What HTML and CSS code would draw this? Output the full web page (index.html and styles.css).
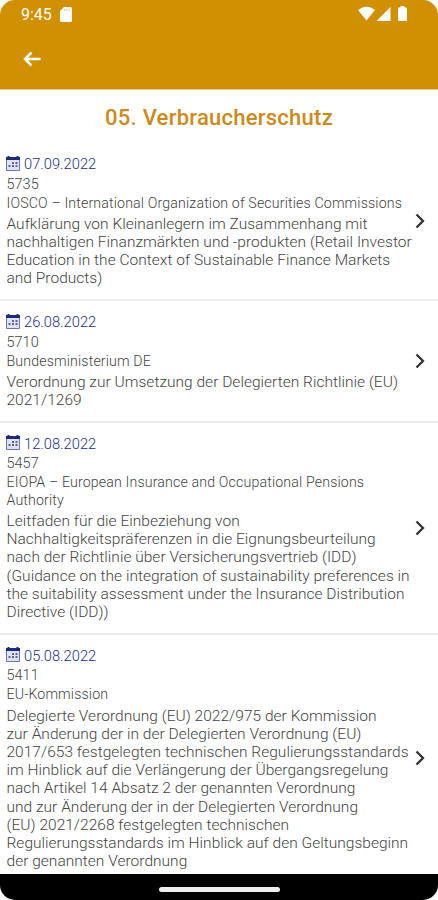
FILE: index.html
```
<!DOCTYPE html>
<html lang="de">
<head>
  <meta charset="UTF-8">
  <meta name="viewport" content="width=device-width, initial-scale=1.0">
  <link rel="stylesheet" href="styles.css">
  <title>05. Verbraucherschutz</title>
</head>
<body>

<svg class="sprite" aria-hidden="true">
  <symbol id="calendar" viewBox="0 0 14 15">
    <path d="M0 1h1.500V0h2v1h7V0h2v1H14v3H0z" fill="#1c2a7c"/>
    <path d="M.5 4v10.500h13V4" fill="#dfe3f1" stroke="#6d76aa"/>
    <path d="M6 6h2v2H6zM9.500 6h2v2h-2zM2.500 9h2v2h-2zM6 9h2v2H6zM9.500 9h2v2h-2z" fill="#5d679f"/>
  </symbol>
  <symbol id="chevron" viewBox="0 0 10 16">
    <path d="M1.500 1.500L8 8l-6.500 6.500" fill="none" stroke="#333" stroke-width="2.300"/>
  </symbol>
</svg>

<div class="phone">
  <header>
    <div class="status">
      <span class="time">9:45</span>
      <svg class="sd" viewBox="0 0 12 15"><path d="M4 0h6.500Q12 0 12 1.500v12q0 1.500-1.500 1.500h-9Q0 15 0 13.500V4z" fill="#fff"/><path d="M4.500 2v2M6.700 2v2M9 2v2" stroke="#e3bd68" stroke-width=".8"/></svg>
      <svg class="signals" viewBox="0 0 50 16">
        <path d="M0 4Q8.500-2.500 17 4L8.500 14.500z" fill="#fff"/>
        <path d="M18.500 15L32.500 1v14z" fill="#fff"/>
        <path d="M42.500 0h4v1.500H48q1 0 1 1V14q0 1-1 1h-7q-1 0-1-1V2.500q0-1 1-1h1.500z" fill="#fff"/>
      </svg>
    </div>
    <svg class="back" viewBox="0 0 18 16"><path d="M8.500 1.500L2 8l6.500 6.500M2 8h15.500" fill="none" stroke="#fff" stroke-width="2.500"/></svg>
  </header>

  <main>
    <h1>05. Verbraucherschutz</h1>

    <article>
      <div class="text">
        <div class="date"><svg><use href="#calendar"/></svg><span>07.09.2022</span></div>
        <div class="number">5735</div>
        <div class="org">IOSCO – International Organization of Securities Commissions</div>
        <div class="title">Aufklärung von Kleinanlegern im Zusammenhang mit<br>nachhaltigen Finanzmärkten und -produkten (Retail Investor<br>Education in the Context of Sustainable Finance Markets<br>and Products)</div>
      </div>
      <svg class="chevron"><use href="#chevron"/></svg>
    </article>

    <article>
      <div class="text">
        <div class="date"><svg><use href="#calendar"/></svg><span>26.08.2022</span></div>
        <div class="number">5710</div>
        <div class="org">Bundesministerium DE</div>
        <div class="title">Verordnung zur Umsetzung der Delegierten Richtlinie (EU)<br>2021/1269</div>
      </div>
      <svg class="chevron"><use href="#chevron"/></svg>
    </article>

    <article>
      <div class="text">
        <div class="date"><svg><use href="#calendar"/></svg><span>12.08.2022</span></div>
        <div class="number">5457</div>
        <div class="org">EIOPA – European Insurance and Occupational Pensions<br>Authority</div>
        <div class="title">Leitfaden für die Einbeziehung von<br>Nachhaltigkeitspräferenzen in die Eignungsbeurteilung<br>nach der Richtlinie über Versicherungsvertrieb (IDD)<br>(Guidance on the integration of sustainability preferences in<br>the suitability assessment under the Insurance Distribution<br>Directive (IDD))</div>
      </div>
      <svg class="chevron"><use href="#chevron"/></svg>
    </article>

    <article>
      <div class="text">
        <div class="date"><svg><use href="#calendar"/></svg><span>05.08.2022</span></div>
        <div class="number">5411</div>
        <div class="org">EU-Kommission</div>
        <div class="title">Delegierte Verordnung (EU) 2022/975 der Kommission<br>zur Änderung der in der Delegierten Verordnung (EU)<br>2017/653 festgelegten technischen Regulierungsstandards<br>im Hinblick auf die Verlängerung der Übergangsregelung<br>nach Artikel 14 Absatz 2 der genannten Verordnung<br>und zur Änderung der in der Delegierten Verordnung<br>(EU) 2021/2268 festgelegten technischen<br>Regulierungsstandards im Hinblick auf den Geltungsbeginn<br>der genannten Verordnung</div>
      </div>
      <svg class="chevron"><use href="#chevron"/></svg>
    </article>
  </main>

  <footer><div class="home"></div></footer>
</div>

</body>
</html>
```
FILE: styles.css
```
body {
  margin: 0;
  background-color: #fff;
  font-family: Roboto, sans-serif;
}

.sprite {
  display: none;
}

.phone {
  display: flex;
  flex-direction: column;
  height: 900px;
  width: 438px;
  border-radius: 15px;
  overflow: hidden;
}

header {
  box-sizing: border-box;
  flex: none;
  height: 90px;
  background-color: #d09000;
  border-bottom: 1px solid #e3c59c;
}

.status {
  display: flex;
  align-items: center;
  height: 28px;
  padding: 0 30px 0 21px;
}

.time {
  color: #fff;
  font-size: 16px;
  line-height: 29px;
}

.sd {
  width: 12px;
  height: 15px;
  margin-left: 8px;
}

.signals {
  width: 50px;
  height: 16px;
  margin-left: auto;
}

.back {
  display: block;
  width: 18px;
  height: 16px;
  margin: 23px 0 0 23px;
}

main {
  flex: 1;
  min-height: 0;
  overflow: hidden;
}

h1 {
  margin: 0;
  height: 53px;
  line-height: 55px;
  font-size: 22px;
  font-weight: 500;
  letter-spacing: 0.25px;
  text-align: center;
  color: #cd8a17;
}

article {
  display: flex;
  align-items: center;
  justify-content: space-between;
  padding: 11px 13px 11.5px 6.5px;
  border-bottom: 2px solid #ececec;
  color: #444;
  font-weight: 300;
  white-space: nowrap;
}

.text {
  width: 400px;
}

.date {
  display: flex;
  align-items: center;
  height: 20px;
  gap: 4px;
  font-size: 14.7px;
  color: #26307f;
}

.date svg {
  width: 14px;
  height: 15px;
  margin: -2px 0 0 -0.5px;
}

.number {
  margin-top: 0.5px;
  font-size: 14.5px;
  line-height: 19.5px;
}

.org {
  margin-top: 0.7px;
  font-size: 14.2px;
  letter-spacing: 0.14px;
  line-height: 17.5px;
}

.title {
  margin-top: 2.6px;
  font-size: 15.5px;
  letter-spacing: 0.02px;
  line-height: 18.2px;
}

.chevron {
  flex: none;
  width: 10px;
  height: 16px;
}

footer {
  display: flex;
  flex: none;
  justify-content: center;
  height: 26px;
  background-color: #000;
}

.home {
  width: 121px;
  height: 5px;
  margin-top: 13px;
  border-radius: 3px;
  background-color: #eee;
}
```
